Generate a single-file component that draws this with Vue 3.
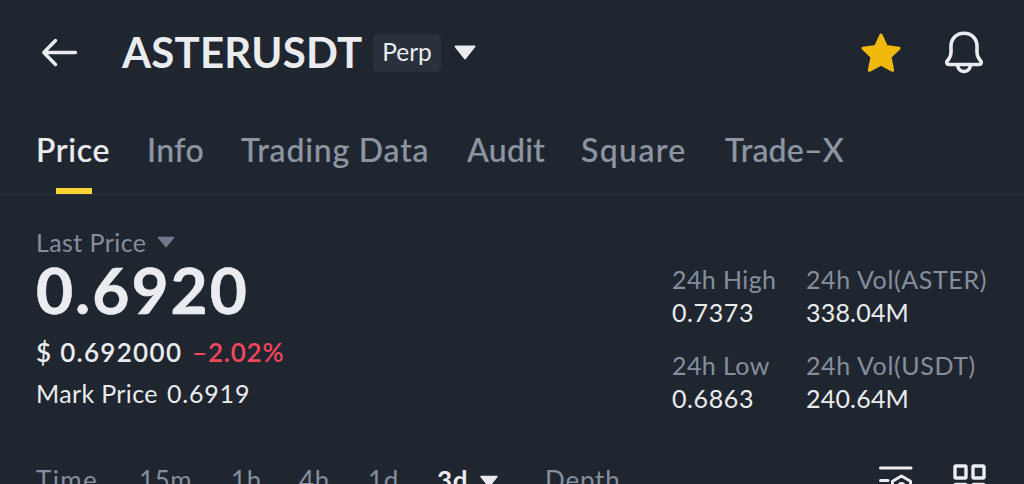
<script setup>
import { ref } from 'vue'

const activeTab = ref('price')
const tabs = [
  { id: 'price', label: 'Price' },
  { id: 'info', label: 'Info' },
  { id: 'trading', label: 'Trading Data' },
  { id: 'audit', label: 'Audit' },
  { id: 'square', label: 'Square' },
  { id: 'tradex', label: 'Trade–X' }
]

const stats = [
  { id: 'high', label: '24h High', value: '0.7373' },
  { id: 'vol-aster', label: '24h Vol(ASTER)', value: '338.04M' },
  { id: 'low', label: '24h Low', value: '0.6863' },
  { id: 'vol-usdt', label: '24h Vol(USDT)', value: '240.64M' }
]

const activeInterval = ref('3d')
const intervals = ['Time', '15m', '1h', '4h', '1d', '3d', 'Depth']
</script>

<template>
  <div class="page">
    <header class="header">
      <svg class="back" width="38" height="30" viewBox="0 0 38 30">
        <path d="M35.500 14.500H3.800M15.500 2.500L3.800 14.500l11.700 12" />
      </svg>
      <h1 class="symbol">ASTERUSDT</h1>
      <span class="badge">Perp</span>
      <svg class="caret" width="24" height="16" viewBox="0 0 24 16">
        <path d="M2.500 1.500H21.500L12 13.500Z" />
      </svg>
      <svg class="star" width="42" height="42" viewBox="0 0 42 42">
        <path d="M21 3L26.300 14.500L39 16.300L30 25L32.700 38.300L21 32.200L9.300 38.300L12 25L3 16.300L15.700 14.500Z" />
      </svg>
      <svg class="bell" width="42" height="44" viewBox="0 0 42 44">
        <path d="M21 3.300c-7.800 0-13 5.600-13 12.800v6.400c0 2.500-.6 4.200-2 6.200l-1.800 2.400c-1.100 1.700-.2 3.400 1.600 3.400h30.400c1.800 0 2.700-1.700 1.600-3.400l-1.800-2.400c-1.400-2-2-3.700-2-6.200v-6.400c0-7.200-5.200-12.800-13-12.800Z" />
        <path d="M14.500 35.500c.8 3.800 3.200 6 6.500 6s5.700-2.200 6.500-6" />
      </svg>
    </header>

    <nav class="tabs">
      <button
        v-for="tab in tabs"
        :key="tab.id"
        class="tab"
        :class="[tab.id, { active: activeTab === tab.id }]"
        @click="activeTab = tab.id"
      >
        {{ tab.label }}
      </button>
    </nav>

    <main class="summary">
      <section class="price-block">
        <div class="last-label">
          <span>Last Price</span>
          <svg class="small-caret" width="18" height="12" viewBox="0 0 18 12">
            <path d="M1.500 1.500H16.500L9 10.500Z" />
          </svg>
        </div>
        <div class="last-price">0.6920</div>
        <div class="change-row">
          <span class="usd">$ 0.692000</span>
          <span class="change">–2.02%</span>
        </div>
        <div class="mark-row">
          <span class="mark-label">Mark Price</span>
          <span class="mark-value">0.6919</span>
        </div>
      </section>

      <section class="stats">
        <div v-for="stat in stats" :key="stat.id" class="stat" :class="stat.id">
          <div class="stat-label">{{ stat.label }}</div>
          <div class="stat-value">{{ stat.value }}</div>
        </div>
      </section>
    </main>

    <footer class="intervals">
      <button
        v-for="item in intervals"
        :key="item"
        class="interval"
        :class="['i-' + item, { active: activeInterval === item }]"
        @click="activeInterval = item"
      >
        <span>{{ item }}</span>
        <svg v-if="item === '3d'" class="interval-caret" width="20" height="14" viewBox="0 0 20 14">
          <path d="M2 1.500H18L10 11.500Z" />
        </svg>
      </button>
      <svg class="settings" width="36" height="34" viewBox="0 0 36 34">
        <path d="M1.500 3H32M1.500 15.500H9M1.500 28H9" />
        <path d="M22.500 11L31.500 16.200V26.500L22.500 31.500L13.500 26.500V16.200Z" />
        <circle cx="22.500" cy="21" r="2.500" />
      </svg>
      <svg class="layout" width="34" height="34" viewBox="0 0 34 34">
        <rect x="2" y="2" width="11" height="12" rx="1" />
        <rect x="20" y="2" width="11" height="12" rx="1" />
        <rect x="2" y="20.500" width="11" height="12" rx="1" />
        <rect x="20" y="20.500" width="11" height="12" rx="1" />
      </svg>
    </footer>
  </div>
</template>

<style>
body {
  background: #202630;
  overflow: hidden;
}
</style>

<style scoped>
.page {
  width: 1024px;
  height: 484px;
  overflow: hidden;
  background: #202630;
  color: #eaecef;
  font-family: Lato, "Open Sans", sans-serif;
  white-space: nowrap;
}

button {
  padding: 0;
  border: none;
  background: none;
  color: inherit;
  font: inherit;
  letter-spacing: inherit;
  text-align: left;
  cursor: pointer;
}

svg {
  display: block;
  flex: none;
  fill: none;
  stroke: #eaecef;
  stroke-linecap: round;
  stroke-linejoin: round;
}

.header {
  display: flex;
  align-items: center;
  height: 105px;
  padding: 0 39px 0 40px;
}

.back {
  stroke-width: 3.4;
}

.symbol {
  width: 240px;
  margin: 0 0 1px 44px;
  font-size: 42px;
  font-weight: 700;
  line-height: 50px;
  letter-spacing: 0.2px;
}

.badge {
  width: 68px;
  height: 38px;
  margin-left: 11px;
  border-radius: 4px;
  background: #29313d;
  font-size: 24.5px;
  line-height: 36px;
  text-align: center;
}

.caret {
  margin-left: 12px;
  fill: #eaecef;
  stroke-width: 2;
}

.star {
  margin-left: auto;
  fill: #f0b90b;
  stroke: #f0b90b;
  stroke-width: 3;
}

.bell {
  margin: 0 0 1px 41px;
  stroke-width: 3.6;
}

.tabs {
  display: flex;
  gap: 36px;
  height: 89px;
  padding-left: 36px;
  border-bottom: 1px solid #2b323d;
  color: #8c95a1;
  font-size: 32px;
  font-weight: 500;
  letter-spacing: 0.7px;
  -webkit-text-stroke: 0.2px;
}

.tab {
  display: flex;
  flex: none;
  flex-direction: column;
  align-items: flex-start;
  padding-top: 25px;
  line-height: 40px;
}

.tab.active {
  color: #eaecef;
}

.tab.active::after {
  content: "";
  width: 36px;
  height: 6px;
  margin: 18px 0 0 20px;
  background: #fcd535;
}

.price {
  width: 75px;
}

.info {
  width: 58px;
  letter-spacing: 0.4px;
}

.trading {
  width: 190px;
  letter-spacing: 0.8px;
}

.audit {
  width: 78px;
  letter-spacing: 0.3px;
}

.square {
  width: 108px;
  letter-spacing: 1.4px;
}

.tradex {
  letter-spacing: 0.2px;
}

.summary {
  display: flex;
  justify-content: space-between;
  height: 269px;
  padding: 0 36px;
}

.price-block {
  padding-top: 32px;
}

.last-label {
  display: flex;
  align-items: center;
  gap: 11px;
  height: 30px;
  color: #848e9c;
  font-size: 25px;
  line-height: 30px;
  letter-spacing: 0.42px;
}

.small-caret {
  fill: #707a8a;
  stroke: #707a8a;
  stroke-width: 1.5;
}

.last-price {
  height: 66px;
  font-size: 64px;
  font-weight: 700;
  line-height: 66px;
  letter-spacing: 2px;
  -webkit-text-stroke: 0.6px;
}

.change-row {
  display: flex;
  height: 36px;
  margin-top: 11px;
  font-size: 26px;
  font-weight: 600;
  line-height: 36px;
  letter-spacing: 1.3px;
}

.usd {
  width: 156px;
}

.change {
  color: #f6465d;
  letter-spacing: 0.8px;
}

.mark-row {
  display: flex;
  height: 36px;
  margin-top: 5px;
  font-size: 25px;
  line-height: 36px;
  letter-spacing: 0.35px;
}

.mark-label {
  width: 131px;
}

.mark-value {
  letter-spacing: 0.8px;
}

.stats {
  display: grid;
  grid-template-columns: 134px 182px;
  grid-auto-rows: 85.5px;
  padding-top: 68px;
}

.stat {
  font-size: 25px;
  line-height: 33px;
  letter-spacing: 0.4px;
}

.stat-label {
  color: #848e9c;
}

.stat-value {
  letter-spacing: 0.6px;
}

.vol-aster .stat-label,
.vol-usdt .stat-label {
  letter-spacing: 0.62px;
}

.vol-aster .stat-value,
.vol-usdt .stat-value {
  letter-spacing: 0.2px;
}

.intervals {
  display: flex;
  height: 40px;
  padding-left: 36px;
  color: #848e9c;
  font-size: 26px;
  line-height: 32px;
  letter-spacing: 0.6px;
}

.interval {
  display: flex;
  width: 69px;
  height: 32px;
}

.i-Time {
  width: 103px;
  letter-spacing: 1.4px;
}

.i-15m {
  width: 92px;
}

.i-1h {
  width: 68px;
}

.i-1d {
  width: 69px;
}

.i-3d {
  width: 108px;
}

.i-Depth {
  letter-spacing: 0.8px;
}

.interval.active {
  color: #eaecef;
  font-weight: 700;
}

.interval-caret {
  margin: 11px 0 0 11px;
  fill: #eaecef;
  stroke-width: 1.5;
}

.settings {
  margin-left: auto;
  margin-top: 1px;
  stroke-width: 3;
}

.layout {
  margin: 0 37px 0 38px;
  stroke-width: 3.4;
}
</style>
